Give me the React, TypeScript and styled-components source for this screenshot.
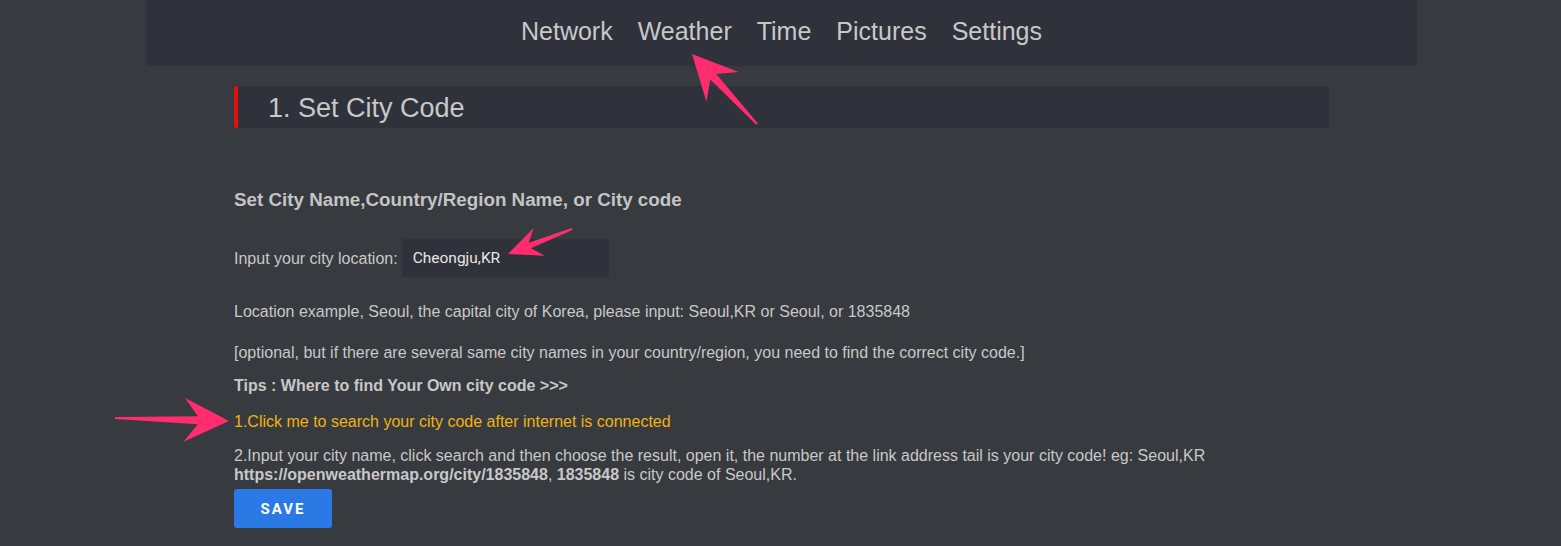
import React from "react";
import styled, { createGlobalStyle } from "styled-components";

const GlobalStyle = createGlobalStyle`
  html, body {
    margin: 0;
    padding: 0;
    background: #373a3f;
  }
  body {
    font-family: "Liberation Sans", Arial, Helvetica, sans-serif;
    color: #c9c9c9;
  }
`;

const navItems = ["Network", "Weather", "Time", "Pictures", "Settings"];

interface ArrowSpec {
  from: [number, number];
  to: [number, number];
  head: number;
  wing: number;
  shaft: number;
}

const arrows: ArrowSpec[] = [
  { from: [757, 124], to: [692, 54], head: 40, wing: 22, shaft: 4 },
  { from: [572, 229], to: [508, 254], head: 30, wing: 15, shaft: 3 },
  { from: [115, 418], to: [229, 421], head: 40, wing: 22, shaft: 4 },
];

function arrowPoints({ from, to, head, wing, shaft }: ArrowSpec) {
  const dx = to[0] - from[0];
  const dy = to[1] - from[1];
  const len = Math.hypot(dx, dy);
  const ux = dx / len;
  const uy = dy / len;
  const nx = -uy;
  const ny = ux;
  const bx = to[0] - ux * head;
  const by = to[1] - uy * head;
  const back = head * 0.12;
  const inner = head * 0.22;
  const pts = [
    [to[0], to[1]],
    [bx + nx * wing - ux * back, by + ny * wing - uy * back],
    [bx + nx * shaft + ux * inner, by + ny * shaft + uy * inner],
    [from[0] + nx * 1, from[1] + ny * 1],
    [from[0] - nx * 1, from[1] - ny * 1],
    [bx - nx * shaft + ux * inner, by - ny * shaft + uy * inner],
    [bx - nx * wing - ux * back, by - ny * wing - uy * back],
  ];
  return pts.map((p) => `${p[0].toFixed(1)},${p[1].toFixed(1)}`).join(" ");
}

const App: React.FC = () => {
  return (
    <Page>
      <GlobalStyle />
      <NavBar>
        {navItems.map((item) => (
          <NavLink key={item}>{item}</NavLink>
        ))}
      </NavBar>

      <Container>
        <SectionHeader>1. Set City Code</SectionHeader>

        <Heading>Set City Name,Country/Region Name, or City code</Heading>

        <InputRow>
          <Label>Input your city location:</Label>
          <CityInput defaultValue="Cheongju,KR" />
        </InputRow>

        <Text $top={26}>
          Location example, Seoul, the capital city of Korea, please input: Seoul,KR or Seoul, or 1835848
        </Text>
        <Text $top={23}>
          [optional, but if there are several same city names in your country/region, you need to find the correct city code.]
        </Text>
        <Text $top={15} $bold>
          Tips : Where to find Your Own city code &gt;&gt;&gt;
        </Text>
        <LinkText>1.Click me to search your city code after internet is connected</LinkText>
        <Steps>
          2.Input your city name, click search and then choose the result, open it, the number at the link address tail is your city code! eg: Seoul,KR
          <br />
          <b>https://openweathermap.org/city/1835848</b>, <b>1835848</b> is city code of Seoul,KR.
        </Steps>

        <SaveButton>SAVE</SaveButton>
      </Container>

      <Annotations viewBox="0 0 1561 546">
        {arrows.map((a, i) => (
          <polygon key={i} points={arrowPoints(a)} fill="#ff2d6f" />
        ))}
      </Annotations>
    </Page>
  );
};

const Page = styled.div`
  position: relative;
  width: 1561px;
  height: 546px;
  overflow: hidden;
  background: #373a3f;
`;

const NavBar = styled.nav`
  margin: 0 144px 0 146px;
  height: 66px;
  background: #2f323a;
  display: flex;
  align-items: center;
  justify-content: center;
  gap: 25px;
`;

const NavLink = styled.a`
  font-size: 25px;
  color: #c8c8c8;
  cursor: pointer;
  line-height: 1;
  padding-bottom: 4px;
`;

const Container = styled.div`
  width: 1095px;
  margin: 0 0 0 234px;
  display: flex;
  flex-direction: column;
  align-items: flex-start;
`;

const SectionHeader = styled.h2`
  margin: 20px 0 0;
  box-sizing: border-box;
  width: 100%;
  height: 42px;
  background: #2f323a;
  border-left: 4px solid #e40f0f;
  border-radius: 3px;
  padding-left: 30px;
  padding-top: 2px;
  display: flex;
  align-items: center;
  font-size: 27px;
  font-weight: 300;
  color: #c8c8c8;
`;

const Heading = styled.h3`
  margin: 62px 0 0;
  font-size: 18.8px;
  line-height: 20px;
  font-weight: bold;
  color: #c4c4c4;
`;

const InputRow = styled.div`
  margin-top: 29px;
  display: flex;
  align-items: center;
  gap: 4px;
`;

const Label = styled.span`
  font-size: 16px;
  color: #c8c8c8;
  padding-top: 1px;
`;

const CityInput = styled.input`
  box-sizing: border-box;
  width: 207px;
  height: 38px;
  background: #2f323a;
  border: none;
  border-radius: 3px;
  padding: 0 11px;
  font-family: "Roboto", "Liberation Sans", sans-serif;
  font-size: 15.5px;
  color: #e6e6e6;
  outline: none;
`;

const Text = styled.p<{ $top: number; $bold?: boolean }>`
  margin: ${(p) => p.$top}px 0 0;
  font-size: 16px;
  line-height: 18px;
  font-weight: ${(p) => (p.$bold ? "bold" : "normal")};
  color: #c8c8c8;
`;

const LinkText = styled.a`
  margin-top: 18px;
  font-size: 16px;
  line-height: 18px;
  color: #f2b20f;
  cursor: pointer;
`;

const Steps = styled.p`
  margin: 15px 0 0;
  font-size: 16px;
  line-height: 19px;
  color: #c8c8c8;

  b {
    font-weight: bold;
  }
`;

const SaveButton = styled.button`
  margin-top: 5px;
  width: 98px;
  height: 39px;
  border: none;
  border-radius: 3px;
  background: #2a79e5;
  color: #ffffff;
  font-family: "Roboto", "Liberation Sans", sans-serif;
  font-size: 15px;
  font-weight: bold;
  letter-spacing: 2px;
  cursor: pointer;
`;

const Annotations = styled.svg`
  position: absolute;
  left: 0;
  top: 0;
  width: 1561px;
  height: 546px;
  pointer-events: none;
`;

export default App;
